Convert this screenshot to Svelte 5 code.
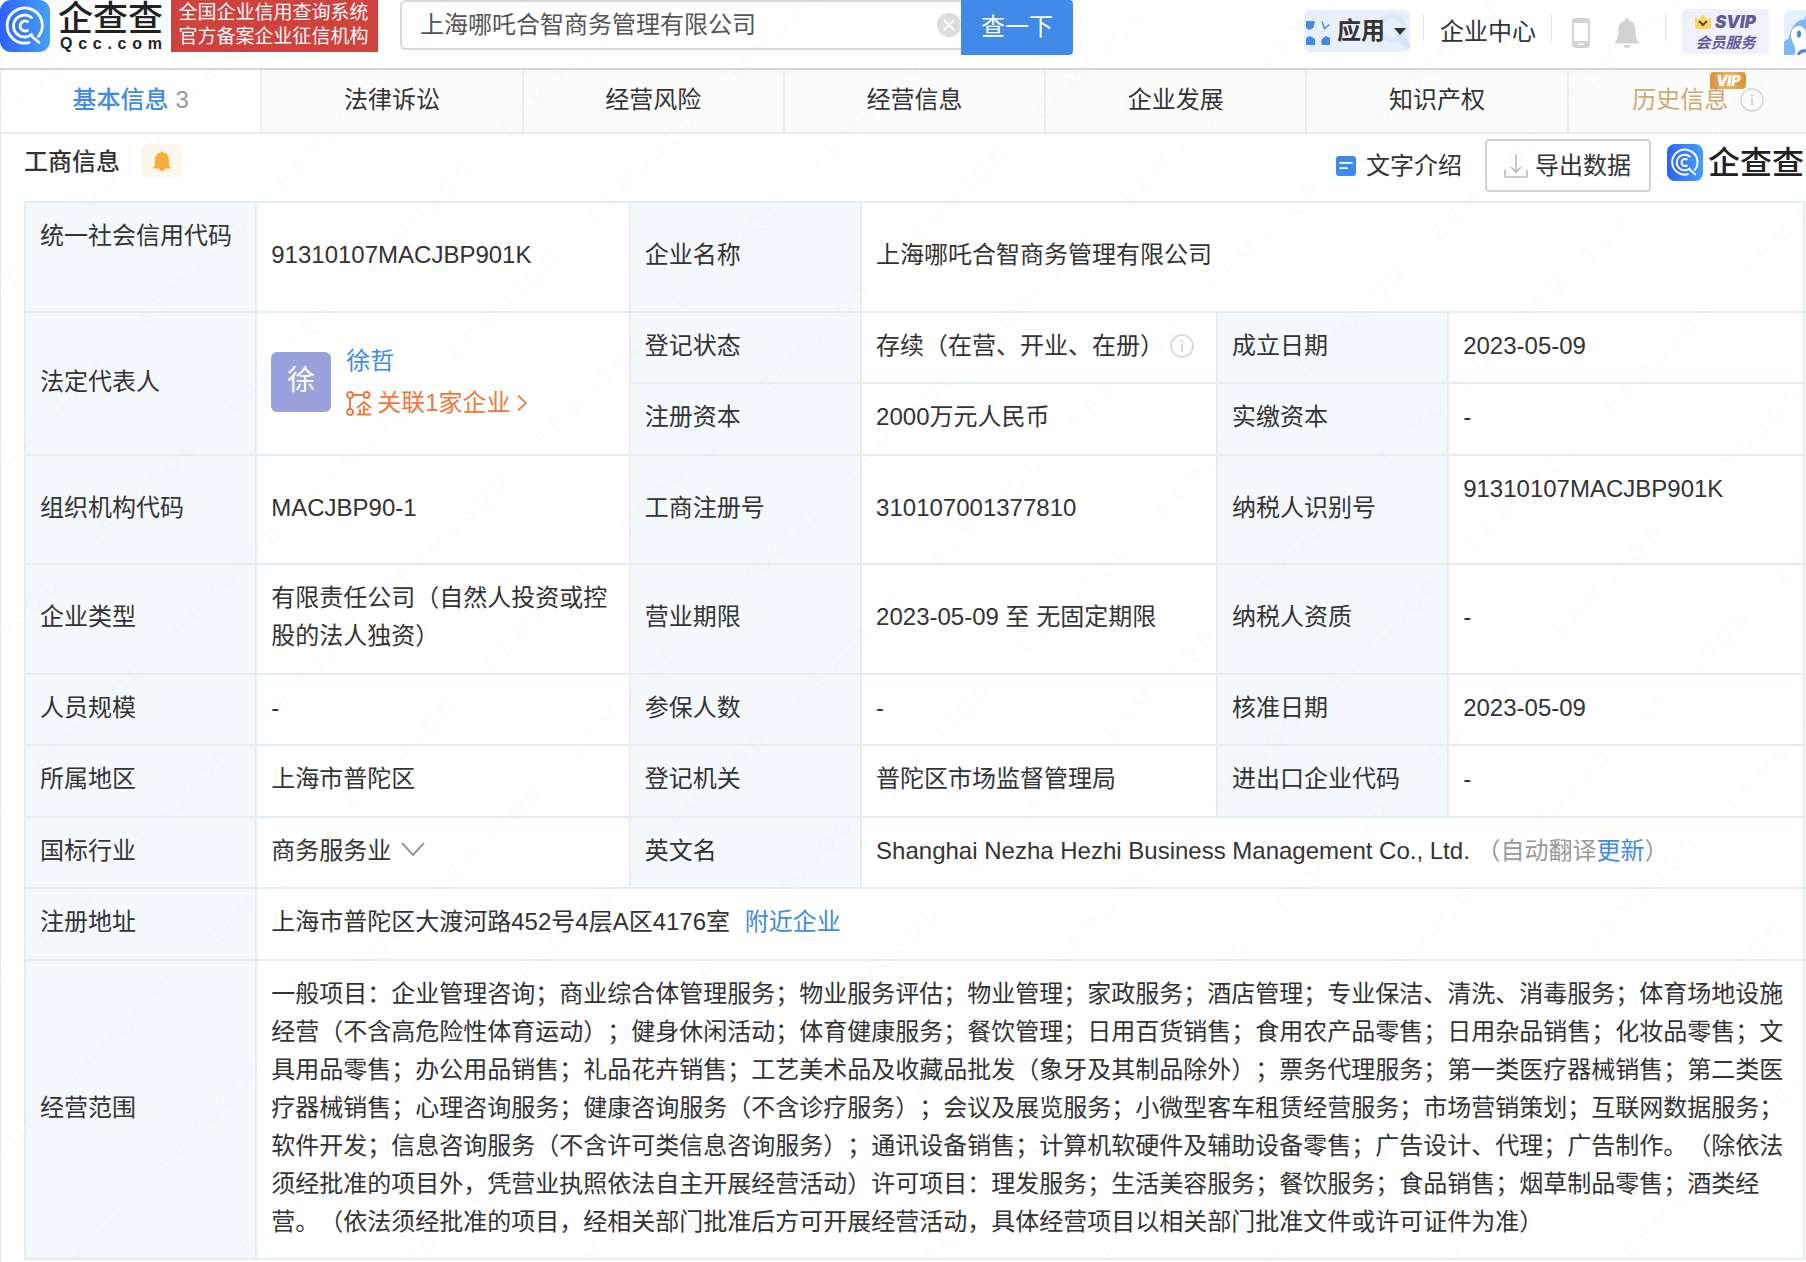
<script>
  const tabs = ['法律诉讼', '经营风险', '经营信息', '企业发展', '知识产权'];
  const domain = 'Qcc.com'.split('');
  let keyword = $state('上海哪吒合智商务管理有限公司');

  const scope =
    '一般项目：企业管理咨询；商业综合体管理服务；物业服务评估；物业管理；家政服务；酒店管理；专业保洁、清洗、消毒服务；体育场地设施经营（不含高危险性体育运动）；健身休闲活动；体育健康服务；餐饮管理；日用百货销售；食用农产品零售；日用杂品销售；化妆品零售；文具用品零售；办公用品销售；礼品花卉销售；工艺美术品及收藏品批发（象牙及其制品除外）；票务代理服务；第一类医疗器械销售；第二类医疗器械销售；心理咨询服务；健康咨询服务（不含诊疗服务）；会议及展览服务；小微型客车租赁经营服务；市场营销策划；互联网数据服务；软件开发；信息咨询服务（不含许可类信息咨询服务）；通讯设备销售；计算机软硬件及辅助设备零售；广告设计、代理；广告制作。（除依法须经批准的项目外，凭营业执照依法自主开展经营活动）许可项目：理发服务；生活美容服务；餐饮服务；食品销售；烟草制品零售；酒类经营。（依法须经批准的项目，经相关部门批准后方可开展经营活动，具体经营项目以相关部门批准文件或许可证件为准）';
</script>

{#snippet mark(id)}
  <svg class="mark" viewBox="0 0 50 52" preserveAspectRatio="none" aria-hidden="true">
    <defs>
      <linearGradient {id} x1="0" y1="0" x2="1" y2="0">
        <stop offset="0" stop-color="#2d62fb" />
        <stop offset="1" stop-color="#45a0f8" />
      </linearGradient>
    </defs>
    <rect width="50" height="52" rx="11" fill="url(#{id})" />
    <g fill="none" stroke="#fff" stroke-width="2.8" stroke-linecap="round">
      <path d="M38.5 36.5A17.6 17.6 0 1 0 29 42.6M32 36.5l7 6" />
      <path d="M31.5 17.5A11 11 0 1 0 31.5 34.5" />
      <path d="M27.5 21.6A5 5 0 1 0 27.5 30.4" />
    </g>
  </svg>
{/snippet}

{#snippet info()}
  <svg class="info" viewBox="0 0 24 24" aria-hidden="true">
    <circle cx="12" cy="12" r="11" fill="none" stroke="#d6d6d6" stroke-width="1.6" />
    <path d="M12 10v7.5M12 6v2" fill="none" stroke="#ccc" stroke-width="1.6" />
  </svg>
{/snippet}

<div class="page">
  <header>
    <a class="brand" href="#home">
      {@render mark('markHeader')}
      <span class="brand-text">
        <span class="brand-name">企查查</span>
        <span class="domain">{#each domain as c}<i>{c}</i>{/each}</span>
      </span>
    </a>
    <p class="slogan">全国企业信用查询系统<br />官方备案企业征信机构</p>
    <form class="search" onsubmit={(e) => e.preventDefault()}>
      <div class="box">
        <input type="text" aria-label="搜索企业" bind:value={keyword} />
        <button class="clear" type="button" aria-label="清空" onclick={() => (keyword = '')}>
          <svg viewBox="0 0 24 24"><circle cx="12" cy="12" r="12" fill="#ddd" /><path d="M7 7l10 10M17 7L7 17" stroke="#fff" stroke-width="1.8" /></svg>
        </button>
      </div>
      <button class="go" type="submit">查一下</button>
    </form>
    <nav class="tools">
      <button class="apps" type="button">
        <svg class="lens" viewBox="0 0 30 36" aria-hidden="true"><circle cx="12" cy="14" r="12" fill="none" stroke="#dbe7fb" stroke-width="4" /><path d="M20 24l7 7" stroke="#d3e4fb" stroke-width="7" stroke-linecap="round" /></svg>
        <svg class="four" viewBox="0 0 24 24" aria-hidden="true">
          <path d="M0 0h9l-1.500 6.500-4 2.500L0 7zM0 24v-7l4-2 5 3v6zM24 24h-8.500v-5.500l4-3.500 4.500 2z" fill="#4189e8" />
          <path d="M16 0.500l2.500 7 5-4" fill="none" stroke="#4189e8" stroke-width="1.4" />
        </svg>
        <b>应用</b>
        <svg class="caret" viewBox="0 0 12 7" aria-hidden="true"><path d="M0 0h12L6 7z" fill="#333" /></svg>
      </button>
      <span class="bar"></span>
      <a class="center" href="#center">企业中心</a>
      <span class="bar"></span>
      <a class="phone" href="#app" aria-label="手机版">
        <svg viewBox="0 0 18 30"><path fill-rule="evenodd" fill="#d3d3d3" d="M4 0h10a4 4 0 0 1 4 4v22a4 4 0 0 1-4 4H4a4 4 0 0 1-4-4V4a4 4 0 0 1 4-4zM2 5v18h14V5zM6 25.500v1.500h6v-1.500z" /></svg>
      </a>
      <a class="bell" href="#notice" aria-label="消息">
        <svg viewBox="0 0 24 30"><path fill="#d3d3d3" d="M12 0a2 2 0 0 1 2 2.500c4 1 6.500 4 6.500 8.500 0 8 1 10.500 3.500 13v1.500H0V24c2.500-2.500 3.500-5 3.500-13C3.500 6.500 6 3.500 10 2.500A2 2 0 0 1 12 0zM8.500 27h7c0 2-1.500 3-3.500 3s-3.500-1-3.500-3z" /></svg>
      </a>
      <span class="bar"></span>
      <a class="svip" href="#svip">
        <span class="svip-top">
          <svg viewBox="0 0 16 15" aria-hidden="true"><path d="M0 3l4 2.500L8 0l4 5.500L16 3v10a2 2 0 0 1-2 2H2a2 2 0 0 1-2-2z" fill="#fbd665" /><path d="M4 7l4 4 4-4" fill="none" stroke="#6b431c" stroke-width="2" /></svg>
          SVIP
        </span>
        <span>会员服务</span>
      </a>
      <a class="avatar" href="#me" aria-label="我的">
        <svg viewBox="0 0 45 45">
          <rect width="45" height="45" rx="8" fill="#e3f1fd" />
          <path d="M0 45V32l5-4C6 17 13 10 21 9c0-4 4-8 9-9h15v45z" fill="#7ab8f6" />
          <path d="M10 45c3-5 0-10-2-15-3-8 1-14 7-14 4 0 6 3 7 6l10 5v18z" fill="#fff" />
          <ellipse cx="15" cy="24" rx="2" ry="3.500" fill="#4189e8" />
          <path d="M14 45c2-4 5-5 9-4" fill="none" stroke="#4189e8" stroke-width="3" />
        </svg>
      </a>
    </nav>
  </header>

  <div class="tab-clip">
    <nav class="tabs">
      <a class="active" href="#base"><b>基本信息</b> <span>3</span></a>
      {#each tabs as t}
        <a href="#{t}">{t}</a>
      {/each}
      <a class="history" href="#history">
        <span class="history-label">历史信息
          <span class="vip">VIP</span>
        </span>
        {@render info()}
      </a>
    </nav>
  </div>

  <main>
    <div class="title-row">
      <h2>工商信息</h2>
      <button class="remind" type="button" aria-label="监控提醒">
        <svg viewBox="0 0 18 20"><path fill="#f6ad3c" d="M9 0l1.200 1.500C14 2 16 5 16 8.500V15l2 1.500v1H12C11.500 19 10.500 20 9 20s-2.500-1-3-2.500H0v-1L2 15V8.500C2 5 4 2 7.800 1.500z" /></svg>
      </button>
      <div class="actions">
        <a class="intro" href="#intro">
          <svg viewBox="0 0 20 20" aria-hidden="true"><rect width="20" height="20" rx="3" fill="#4189e8" /><path d="M3.500 6.800h13M3.500 12.200h8" stroke="#fff" stroke-width="1.800" /></svg>
          文字介绍
        </a>
        <button class="export" type="button">
          <svg viewBox="0 0 24 24" aria-hidden="true"><path d="M12 0v18M7 13l5 5 5-5M1 16v7h22v-7" fill="none" stroke="#bbb" stroke-width="1.600" /></svg>
          导出数据
        </button>
        <div class="small-brand">
          {@render mark('markSection')}
          <span>企查查</span>
        </div>
      </div>
    </div>

    <table>
      <colgroup>
        <col class="k" /><col class="wide" /><col class="k" /><col class="v" /><col class="k" /><col class="v" />
      </colgroup>
      <tbody>
        <tr>
          <th class="copyable" scope="row">统一社会信用代码</th>
          <td>91310107MACJBP901K</td>
          <th scope="row">企业名称</th>
          <td colspan="3">上海哪吒合智商务管理有限公司</td>
        </tr>
        <tr>
          <th scope="row" rowspan="2">法定代表人</th>
          <td rowspan="2">
            <div class="person">
              <span class="face">徐</span>
              <div class="person-text">
                <a href="#xuzhe">徐哲</a>
                <a class="related" href="#related">
                  <svg class="link-icon" viewBox="0 0 25 25" fill="none" stroke="#f0783c" stroke-width="1.900" aria-hidden="true">
                    <circle cx="4" cy="4" r="3" /><circle cx="20.500" cy="4" r="3" /><circle cx="4" cy="21" r="3" />
                    <path d="M7 4h10.500M4 7v11" />
                    <path d="M11 17l7-6 7 6M18 15v8M18 18.500h4.500M14 18v5M11 23.500h14" />
                  </svg>
                  关联1家企业
                  <svg class="arrow" viewBox="0 0 10 16" aria-hidden="true"><path d="M1 0.500L9 8l-8 7.500" fill="none" stroke="#f0783c" stroke-width="1.800" /></svg>
                </a>
              </div>
            </div>
          </td>
          <th scope="row">登记状态</th>
          <td><span class="with-icon status">存续（在营、开业、在册）{@render info()}</span></td>
          <th scope="row">成立日期</th>
          <td>2023-05-09</td>
        </tr>
        <tr>
          <th scope="row">注册资本</th>
          <td>2000万元人民币</td>
          <th scope="row">实缴资本</th>
          <td>-</td>
        </tr>
        <tr>
          <th scope="row">组织机构代码</th>
          <td>MACJBP90-1</td>
          <th scope="row">工商注册号</th>
          <td>310107001377810</td>
          <th scope="row">纳税人识别号</th>
          <td class="copyable">91310107MACJBP901K</td>
        </tr>
        <tr>
          <th scope="row">企业类型</th>
          <td>有限责任公司（自然人投资或控股的法人独资）</td>
          <th scope="row">营业期限</th>
          <td>2023-05-09 至 无固定期限</td>
          <th scope="row">纳税人资质</th>
          <td>-</td>
        </tr>
        <tr>
          <th scope="row">人员规模</th>
          <td>-</td>
          <th scope="row">参保人数</th>
          <td>-</td>
          <th scope="row">核准日期</th>
          <td>2023-05-09</td>
        </tr>
        <tr>
          <th scope="row">所属地区</th>
          <td>上海市普陀区</td>
          <th scope="row">登记机关</th>
          <td>普陀区市场监督管理局</td>
          <th scope="row">进出口企业代码</th>
          <td>-</td>
        </tr>
        <tr>
          <th scope="row">国标行业</th>
          <td>
            <span class="with-icon">商务服务业
              <svg class="down" viewBox="0 0 24 14" aria-hidden="true"><path d="M1 1l11 12L23 1" fill="none" stroke="#999" stroke-width="2" /></svg>
            </span>
          </td>
          <th scope="row">英文名</th>
          <td colspan="3">Shanghai Nezha Hezhi Business Management Co., Ltd. <span class="auto">（自动翻译<a href="#update">更新</a>）</span></td>
        </tr>
        <tr>
          <th scope="row">注册地址</th>
          <td colspan="5">上海市普陀区大渡河路452号4层A区4176室 <a class="near" href="#near">附近企业</a></td>
        </tr>
        <tr>
          <th scope="row">经营范围</th>
          <td colspan="5">{scope}</td>
        </tr>
      </tbody>
    </table>
  </main>

  <svg class="watermark" aria-hidden="true">
    <defs>
      <pattern id="wm" width="195" height="122" patternUnits="userSpaceOnUse" patternTransform="translate(130 310) rotate(-45)">
        <text x="0" y="24">E E M U 3 Q D</text>
      </pattern>
    </defs>
    <rect width="100%" height="100%" fill="url(#wm)" />
  </svg>
</div>

<style>
  :global(body) {
    margin: 0;
    background: #fff;
  }
  .page {
    position: relative;
    overflow: hidden;
    color: #333;
    font: 24px/38px 'Liberation Sans', 'Noto Sans CJK SC', sans-serif;
    text-spacing-trim: space-all;
  }
  a {
    color: inherit;
    text-decoration: none;
  }
  button,
  input {
    font: inherit;
    color: inherit;
    border: 0;
    padding: 0;
    background: none;
  }
  button {
    cursor: pointer;
  }
  svg {
    display: block;
    flex: none;
  }

  header {
    display: flex;
    align-items: flex-start;
    height: 68px;
    border-bottom: 2px solid #d6d6d6;
  }
  .brand {
    display: flex;
    gap: 8px;
    width: 171px;
    flex: none;
    color: #222;
  }
  .mark {
    width: 50px;
    height: 52px;
  }
  .brand-text {
    display: flex;
    flex-direction: column;
    width: 106px;
  }
  .brand-name {
    font-size: 35px;
    line-height: 38px;
    font-weight: 500;
    white-space: nowrap;
  }
  .domain {
    display: flex;
    justify-content: space-between;
    padding: 0 2px;
    font: bold 16px/12px 'Liberation Sans', sans-serif;
  }
  .domain i {
    font-style: normal;
  }
  .slogan {
    margin: 0;
    width: 207px;
    height: 52px;
    padding: 1px 8px 0 6px;
    flex: none;
    box-sizing: border-box;
    background: #cf423d;
    color: #fff;
    font-size: 19px;
    line-height: 24px;
    text-align: center;
    white-space: nowrap;
  }
  .search {
    display: flex;
    align-items: flex-start;
    margin-left: 22px;
    flex: 0 1 673px;
  }
  .box {
    display: flex;
    align-items: center;
    flex: 1;
    height: 50px;
    box-sizing: border-box;
    border: 2px solid #d8d8d8;
    border-right: 0;
    border-radius: 6px 0 0 6px;
  }
  input {
    flex: 1;
    min-width: 0;
    padding-left: 18px;
    color: #555;
    outline: 0;
  }
  .clear svg {
    width: 24px;
    height: 24px;
  }
  .go {
    width: 112px;
    height: 55px;
    padding-bottom: 2px;
    background: #418ae8;
    color: #fff;
    border-radius: 0 4px 4px 0;
  }
  .tools {
    display: flex;
    align-items: center;
    margin-left: auto;
    height: 62px;
    white-space: nowrap;
  }
  .apps {
    position: relative;
    display: flex;
    align-items: center;
    gap: 7px;
    height: 42px;
    padding: 0 4px 0 2px;
    border-radius: 6px;
    background: #e8effd;
  }
  .apps b {
    position: relative;
    font-weight: 700;
  }
  .lens {
    position: absolute;
    right: 0;
    top: 4px;
    width: 30px;
    height: 36px;
  }
  .four {
    width: 24px;
    height: 24px;
    margin-top: 4px;
  }
  .caret {
    position: relative;
    width: 12px;
    height: 7px;
    margin-left: 2px;
  }
  .bar {
    width: 1px;
    height: 27px;
    margin: 0 16px 8px 13px;
    background: #e2e2e2;
  }
  .center {
    padding: 2px 2px 0 0;
  }
  .phone {
    margin: 4px 25px 0 4px;
  }
  .phone svg {
    width: 18px;
    height: 30px;
  }
  .bell {
    margin: 4px 13px 0 0;
  }
  .bell svg {
    width: 24px;
    height: 30px;
  }
  .svip {
    display: flex;
    flex-direction: column;
    align-items: center;
    width: 87px;
    height: 45px;
    padding-top: 2px;
    box-sizing: border-box;
    border-radius: 4px;
    background: #f1f1fe;
    color: #605c9b;
    font-size: 15px;
    line-height: 20px;
    font-weight: 700;
    font-style: italic;
  }
  .svip-top {
    display: flex;
    align-items: center;
    gap: 4px;
    font: italic 900 17px/22px Inter, sans-serif;
  }
  .svip-top svg {
    width: 16px;
    height: 15px;
  }
  .avatar {
    width: 22px;
    height: 45px;
    margin: 3px 0 0 15px;
    overflow: hidden;
  }
  .avatar svg {
    width: 45px;
    height: 45px;
  }

  .tab-clip {
    overflow: hidden;
    border-bottom: 2px solid #ededed;
  }
  .tabs {
    display: flex;
    height: 62px;
    margin-right: -24px;
    border-left: 1px solid #e8e8e8;
    background: linear-gradient(#f7f7f7, #fcfcfc 6px);
  }
  .tabs > a {
    display: flex;
    align-items: center;
    justify-content: center;
    flex: 1 1 0;
    box-sizing: border-box;
    padding-bottom: 2px;
    border-right: 2px solid #ededed;
  }
  .tabs .active {
    gap: 7px;
    background: #fff;
    color: #418ae8;
  }
  .active b {
    font-weight: 500;
  }
  .active span {
    color: #999;
  }
  .tabs .history {
    gap: 12px;
    color: #cfa972;
  }
  .history-label {
    position: relative;
  }
  .vip {
    position: absolute;
    right: -18px;
    top: -9px;
    width: 36px;
    height: 17px;
    border-radius: 4px 4px 4px 0;
    background: linear-gradient(90deg, #d9943f, #e8b268 50%, #dc9434);
    color: #fff;
    font: italic 900 14px/17px Inter, sans-serif;
    text-align: center;
  }
  .info {
    width: 24px;
    height: 24px;
  }

  main {
    padding: 5px 1px 2px 23px;
    border-left: 1px solid #e8e8e8;
  }
  .title-row {
    display: flex;
    align-items: flex-start;
    height: 62px;
    white-space: nowrap;
  }
  h2 {
    margin: 4px 21px 0 0;
    font-size: 24px;
    line-height: 38px;
    font-weight: 500;
  }
  .remind {
    display: grid;
    place-items: center;
    width: 41px;
    height: 33px;
    margin-top: 5px;
    border-radius: 4px;
    background: #fef7ec;
  }
  .remind svg {
    width: 18px;
    height: 20px;
  }
  .actions {
    display: flex;
    align-items: center;
    margin-left: auto;
  }
  .intro {
    display: flex;
    align-items: center;
    gap: 10px;
    margin-right: 23px;
  }
  .intro svg {
    width: 20px;
    height: 20px;
  }
  .export {
    display: flex;
    align-items: center;
    gap: 7px;
    height: 53px;
    padding: 0 18px 0 17px;
    border: 2px solid #d2d2d2;
    border-radius: 4px;
  }
  .export svg {
    width: 24px;
    height: 24px;
  }
  .small-brand {
    display: flex;
    align-items: center;
    gap: 5px;
    width: 138px;
    margin: 0 0 6px 16px;
    color: #222;
    font-size: 32px;
    font-weight: 500;
  }
  .small-brand .mark {
    width: 36px;
    height: 37px;
  }

  table {
    width: 100%;
    table-layout: fixed;
    border-collapse: collapse;
  }
  .k {
    width: 13%;
  }
  .wide {
    width: 21%;
  }
  .v {
    width: 20%;
  }
  th,
  td {
    padding: 14px 14px 17px;
    border: 2px solid #e3edf5;
    text-align: left;
    vertical-align: middle;
    font-weight: 400;
    overflow-wrap: anywhere;
  }
  tr:nth-child(odd) > th,
  tr:nth-child(odd) > td {
    padding-bottom: 18px;
  }
  th {
    background: #f3f9fd;
  }
  th.copyable,
  td.copyable {
    height: 76px;
    vertical-align: top;
  }
  td a {
    color: #418ae8;
  }
  .person {
    display: flex;
    align-items: center;
    gap: 15px;
  }
  .face {
    width: 60px;
    height: 60px;
    flex: none;
    border-radius: 6px;
    background: #9aa1dc;
    color: #fff;
    font-size: 28px;
    line-height: 58px;
    text-align: center;
  }
  .person-text {
    display: flex;
    flex-direction: column;
    gap: 4px;
  }
  .person-text .related {
    display: flex;
    align-items: center;
    gap: 6px;
    color: #f0783c;
  }
  .link-icon {
    width: 25px;
    height: 25px;
  }
  .arrow {
    width: 10px;
    height: 16px;
  }
  .with-icon {
    display: flex;
    align-items: center;
    gap: 10px;
    white-space: nowrap;
  }
  .status {
    gap: 6px;
  }
  .down {
    width: 24px;
    height: 14px;
    margin-bottom: 4px;
  }
  .auto {
    color: #999;
  }
  .near {
    margin-left: 8px;
  }
  .watermark {
    position: absolute;
    inset: 0;
    width: 100%;
    height: 100%;
    pointer-events: none;
  }
  .watermark text {
    font: 22px 'Liberation Sans', sans-serif;
    fill: #000;
    fill-opacity: 0.012;
  }
</style>
